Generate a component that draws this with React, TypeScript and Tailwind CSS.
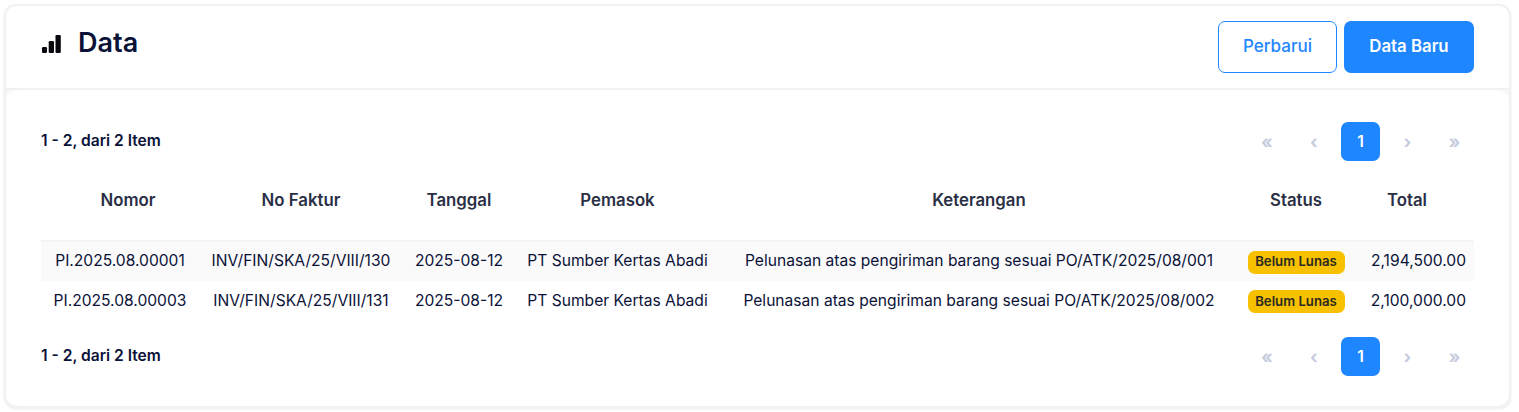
import React from "react";

const rows = [
  ["PI.2025.08.00001", "INV/FIN/SKA/25/VIII/130", "2025-08-12", "PT Sumber Kertas Abadi", "Pelunasan atas pengiriman barang sesuai PO/ATK/2025/08/001", "2,194,500.00"],
  ["PI.2025.08.00003", "INV/FIN/SKA/25/VIII/131", "2025-08-12", "PT Sumber Kertas Abadi", "Pelunasan atas pengiriman barang sesuai PO/ATK/2025/08/002", "2,100,000.00"],
];

function Pager() {
  return (
    <div className="flex h-[39px] items-center justify-between">
      <span className="pb-[2px] text-[15.6px] font-semibold text-[#0b1238]">1 - 2, dari 2 Item</span>
      <div className="flex items-center text-[18px] font-bold text-[#c6cbde]">
        <span className="flex w-[39px] justify-center pl-[1px]">«</span>
        <span className="ml-[8px] flex w-[39px] justify-center pl-[1px]">‹</span>
        <span className="ml-[8px] flex h-[39px] w-[39px] items-center justify-center rounded-[7px] bg-[#1e86ff] text-[15.6px] font-semibold text-white">1</span>
        <span className="ml-[8px] flex w-[39px] justify-center">›</span>
        <span className="ml-[8px] flex w-[39px] justify-center">»</span>
      </div>
    </div>
  );
}

export default function App() {
  return (
    <div className="h-[412px] bg-white pl-[4px] pr-[8px] pt-[4px] font-['Inter',sans-serif]">
      <div className="h-[404px] overflow-hidden rounded-[12px] border-2 border-[#f1f1f3] bg-[#f8f8f9] shadow-[0_1px_3px_rgba(0,0,0,0.08)]">
        <div className="flex h-[84px] items-start justify-between border-b-2 border-[#f1f1f3] bg-white px-[35px] pt-[15px]">
          <div className="mt-[5px] flex items-center gap-[17px]">
            <svg width="20" height="18" viewBox="0 0 20 18" className="mt-[1px]" fill="#08080f">
              <rect x="1" y="12" width="5" height="6" rx="1.2" />
              <rect x="7.7" y="6" width="5.3" height="12" rx="1.2" />
              <rect x="14.5" y="0" width="5.3" height="18" rx="1.2" />
            </svg>
            <h1 className="text-[27px] font-semibold leading-[34px] text-[#0b1238]">Data</h1>
          </div>
          <div className="flex gap-[7px]">
            <button className="flex h-[52px] w-[119px] items-center justify-center rounded-[7px] border border-[#1e86ff] bg-white text-[17px] font-medium text-[#1e86ff]">Perbarui</button>
            <button className="flex h-[52px] w-[130px] items-center justify-center rounded-[7px] bg-[#1e86ff] text-[16.8px] font-semibold text-white">Data Baru</button>
          </div>
        </div>
        <div className="h-[316px] rounded-[12px] bg-white px-[35px] pt-[32px]">
          <Pager />
          <table className="mt-[18px] w-[1433px] table-fixed border-collapse text-[15.6px] text-[#0b1238]">
            <colgroup>
              <col className="w-[158px]" />
              <col className="w-[204px]" />
              <col className="w-[112px]" />
              <col className="w-[205px]" />
              <col className="w-[518px]" />
              <col className="w-[116px]" />
              <col className="w-[120px]" />
            </colgroup>
            <thead>
              <tr className="h-[62px] border-b-2 border-[#f4f4f6] text-[16.8px] text-[#2a2f45]">
                <th className="pb-[18px] pl-[16px] font-semibold">Nomor</th>
                <th className="pb-[18px] font-semibold">No Faktur</th>
                <th className="pb-[18px] font-semibold">Tanggal</th>
                <th className="pb-[18px] font-semibold">Pemasok</th>
                <th className="pb-[18px] font-semibold">Keterangan</th>
                <th className="pb-[18px] font-semibold">Status</th>
                <th className="pb-[18px] pr-[14px] font-semibold">Total</th>
              </tr>
            </thead>
            <tbody>
              {rows.map((r, i) => (
                <tr key={r[0]} className={i === 0 ? "h-[40px] bg-[#fafafa]" : "h-[40px]"}>
                  <td className="pb-[1px] text-center">{r[0]}</td>
                  <td className="pb-[1px] text-center">{r[1]}</td>
                  <td className="pb-[1px] text-center">{r[2]}</td>
                  <td className="pb-[1px] text-center">{r[3]}</td>
                  <td className="pb-[1px] text-center">{r[4]}</td>
                  <td className="text-center">
                    <span className="inline-flex h-[23px] w-[97px] items-center justify-center rounded-[7px] bg-[#f7c100] text-[13.2px] font-semibold text-[#2a2a20]">Belum Lunas</span>
                  </td>
                  <td className="pb-[1px] pr-[8px] text-right">{r[5]}</td>
                </tr>
              ))}
            </tbody>
          </table>
          <div className="mt-[16px]">
            <Pager />
          </div>
        </div>
      </div>
    </div>
  );
}
